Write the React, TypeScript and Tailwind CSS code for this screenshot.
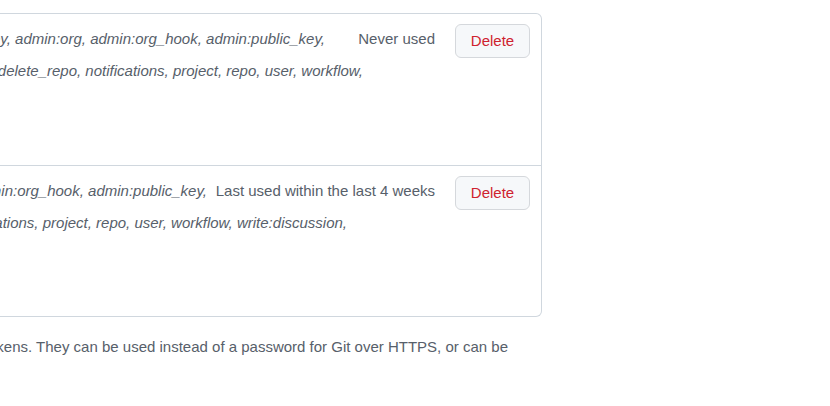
import React from 'react';

const tokens = [
  {
    scopesTop: 'admin:enterprise, admin:gpg_key, admin:org, admin:org_hook, admin:public_key,',
    topWidth: 'w-[325px]',
    scopesBottom: 'admin:repo_hook, codespace, delete:packages, delete_repo, notifications, project, repo, user, workflow,',
    bottomWidth: 'w-[363px]',
    lastUsed: 'Never used',
  },
  {
    scopesTop: 'admin:enterprise, admin:gpg_key, admin:org, admin:org_hook, admin:public_key,',
    topWidth: 'w-[207px]',
    scopesBottom: 'codespace, delete:packages, delete_repo, notifications, project, repo, user, workflow, write:discussion,',
    bottomWidth: 'w-[347px]',
    lastUsed: 'Last used within the last 4 weeks',
  },
];

export default function App() {
  return (
    <div
      className="w-[830px] h-[406px] overflow-hidden bg-white text-[15px] leading-5 text-[#57606a]"
      style={{ fontFamily: '"Liberation Sans", Arial, sans-serif' }}
    >
      <div className="w-[542px] pt-[13px]">
        {/* Token list */}
        <div className="border-y border-r border-[#d0d7de] rounded-r-md">
          {tokens.map((t, i) => (
            <div
              key={i}
              className={`flex items-start pt-[10px] pr-[11px] h-[151px] ${i > 0 ? 'border-t border-[#d0d7de]' : ''}`}
            >
              <div className="flex-1 min-w-0 pt-[5px]">
                <div className="flex items-start">
                  <div className={`${t.topWidth} shrink-0 overflow-hidden flex justify-end whitespace-nowrap`}>
                    <em>{t.scopesTop}</em>
                  </div>
                  <span className="ml-auto whitespace-nowrap">{t.lastUsed}</span>
                </div>
                <div className={`${t.bottomWidth} mt-3 overflow-hidden flex justify-end whitespace-nowrap`}>
                  <em>{t.scopesBottom}</em>
                </div>
              </div>
              <button className="ml-5 w-[75px] h-[34px] shrink-0 rounded-md border border-[#d5d8dc] bg-[#f6f8fa] text-[#cf222e] text-[15px]">
                Delete
              </button>
            </div>
          ))}
        </div>

        {/* Description */}
        <div className="mt-5 w-[508px] overflow-hidden flex justify-end whitespace-nowrap">
          <span>Personal access tokens function like ordinary OAuth access tokens. They can be used instead of a password for Git over HTTPS, or can be</span>
        </div>
      </div>
    </div>
  );
}
